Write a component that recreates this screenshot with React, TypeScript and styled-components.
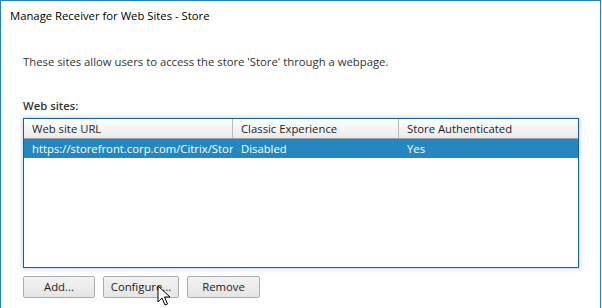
import React from "react";
import styled, { createGlobalStyle } from "styled-components";

const Global = createGlobalStyle`
  html, body { margin: 0; padding: 0; background: #ffffff; }
  body { font-family: "Segoe UI", "Open Sans", "Noto Sans", sans-serif; }
`;

const Window = styled.div`
  box-sizing: border-box;
  width: 601px;
  height: 308px;
  border-top: 1px solid #1c7fd6;
  border-left: 1px solid #1c7fd6;
  border-right: 1px solid #1c7fd6;
  background: #ffffff;
  display: flex;
  flex-direction: column;
  color: #1e1e1e;
  font-size: 11.3px;
`;

const Title = styled.div`
  padding: 7px 0 0 9px;
  height: 20px;
  line-height: 16px;
  font-size: 11.3px;
  color: #000000;
`;

const Content = styled.div`
  display: flex;
  flex-direction: column;
  padding: 0 0 0 22px;
`;

const Description = styled.div`
  margin-top: 26px;
  line-height: 16px;
  color: #333333;
`;

const Label = styled.div`
  margin-top: 28px;
  line-height: 16px;
  font-weight: 600;
  color: #333333;
`;

const Table = styled.div`
  margin-top: 4px;
  box-sizing: border-box;
  width: 556px;
  height: 150px;
  border: 1px solid #1a5ea8;
  box-shadow: 0 0 4px 1px rgba(90, 150, 210, 0.35);
  display: flex;
  flex-direction: column;
  overflow: hidden;
`;

const cols = "209px 166px 1fr";

const HeaderRow = styled.div`
  display: grid;
  grid-template-columns: ${cols};
  height: 20px;
  box-sizing: border-box;
  background: linear-gradient(#ffffff, #f2f2f2 60%, #ebebeb);
  border-bottom: 1px solid #a0a0a0;
`;

const HeaderCell = styled.div<{ $last?: boolean }>`
  padding-left: 8px;
  line-height: 19px;
  color: #1e1e1e;
  border-right: ${(p) => (p.$last ? "none" : "1px solid #b9b9b9")};
  white-space: nowrap;
  overflow: hidden;
`;

const Row = styled.div<{ $selected?: boolean }>`
  display: grid;
  grid-template-columns: ${cols};
  height: 19px;
  background: ${(p) => (p.$selected ? "#2587bf" : "transparent")};
  color: ${(p) => (p.$selected ? "#ffffff" : "#1e1e1e")};
`;

const Cell = styled.div`
  padding-left: 8px;
  padding-right: 8px;
  line-height: 19px;
  white-space: nowrap;
  overflow: hidden;
  text-overflow: clip;
`;

const Buttons = styled.div`
  display: flex;
  gap: 8px;
  margin-top: 8px;
`;

const Button = styled.button<{ $w: number }>`
  box-sizing: border-box;
  width: ${(p) => p.$w}px;
  height: 22px;
  border: 1px solid #acacac;
  border-radius: 2px;
  background: linear-gradient(#f2f2f2, #e5e5e5);
  font-family: inherit;
  font-size: 11.3px;
  color: #1e1e1e;
  padding: 0;
  line-height: 18px;
`;

const ButtonWrap = styled.div`
  position: relative;
`;

const Cursor = styled.svg`
  position: absolute;
  left: 54px;
  top: 9px;
  width: 14px;
  height: 22px;
`;

export default function App() {
  return (
    <>
      <Global />
      <Window>
        <Title>Manage Receiver for Web Sites - Store</Title>
        <Content>
          <Description>These sites allow users to access the store 'Store' through a webpage.</Description>
          <Label>Web sites:</Label>
          <Table>
            <HeaderRow>
              <HeaderCell>Web site URL</HeaderCell>
              <HeaderCell>Classic Experience</HeaderCell>
              <HeaderCell $last>Store Authenticated</HeaderCell>
            </HeaderRow>
            <Row $selected>
              <Cell>https://storefront.corp.com/Citrix/StoreWeb</Cell>
              <Cell>Disabled</Cell>
              <Cell>Yes</Cell>
            </Row>
          </Table>
          <Buttons>
            <Button $w={72}>Add...</Button>
            <ButtonWrap>
              <Button $w={76}>Configure...</Button>
              <Cursor viewBox="0 0 14 22">
                <path d="M1 1 L1 17 L5 13 L8 20 L10.5 19 L7.5 12 L13 12 Z" fill="#ffffff" stroke="#000000" strokeWidth="1" strokeLinejoin="round" />
              </Cursor>
            </ButtonWrap>
            <Button $w={73}>Remove</Button>
          </Buttons>
        </Content>
      </Window>
    </>
  );
}
